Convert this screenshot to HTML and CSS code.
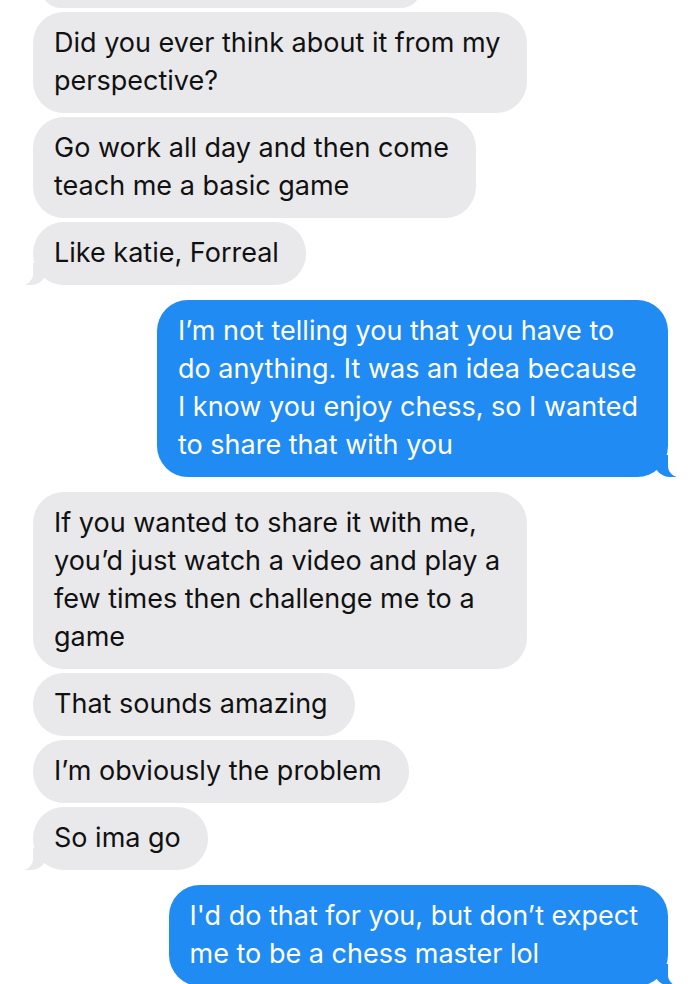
FILE: index.html
```html
<!DOCTYPE html>
<html lang="en">
<head>
    <meta charset="UTF-8">
    <meta name="viewport" content="width=device-width, initial-scale=1.0">
    <title>Messages</title>
    <link rel="stylesheet" href="styles.css">
</head>
<body>
    <div class="thread">
        <div class="group">
            <div class="bubble them cut"></div>
            <div class="bubble them">Did you ever think about it from my<br>perspective?</div>
            <div class="bubble them">Go work all day and then come<br>teach me a basic game</div>
            <div class="bubble them tail">Like katie, Forreal</div>
        </div>

        <div class="group">
            <div class="bubble me tail">I’m not telling you that you have to<br>do anything. It was an idea because<br>I know you enjoy chess, so I wanted<br>to share that with you</div>
        </div>

        <div class="group">
            <div class="bubble them">If you wanted to share it with me,<br>you’d just watch a video and play a<br>few times then challenge me to a<br>game</div>
            <div class="bubble them">That sounds amazing</div>
            <div class="bubble them">I’m obviously the problem</div>
            <div class="bubble them tail">So ima go</div>
        </div>

        <div class="group">
            <div class="bubble me tail">I'd do that for you, but don’t expect<br>me to be a chess master lol</div>
        </div>
    </div>
</body>
</html>
```

FILE: styles.css
```css
body {
    margin: 0;
    background-color: #fff;
    font-family: Inter, "Noto Sans", sans-serif;
    overflow: hidden;
}

.thread {
    padding: 0 32px 0 33px;
}

.group {
    display: flex;
    flex-direction: column;
    gap: 4px;
    margin-bottom: 15px;
}

.bubble {
    position: relative;
    width: fit-content;
    border-radius: 31px;
    font-size: 27px;
    line-height: 38px;
}

.them {
    align-self: flex-start;
    padding: 12px 27px 13px 21px;
    background-color: #e9e9eb;
    color: #111;
}

.me {
    align-self: flex-end;
    padding: 12px 30px 13px 21px;
    background-color: #1f8bf3;
    color: #fff;
}

.cut {
    width: 380px;
    height: 40px;
    margin-top: -32px;
    margin-left: 8px;
    padding: 0;
}

/* little tails at the bottom corner */
.them.tail::before,
.me.tail::before {
    content: "";
    position: absolute;
    bottom: 0;
    height: 22px;
    width: 22px;
}

.them.tail::after,
.me.tail::after {
    content: "";
    position: absolute;
    bottom: 0;
    height: 22px;
    width: 12px;
    background-color: #fff;
}

.them.tail::before {
    left: -8px;
    background-color: #e9e9eb;
    border-bottom-right-radius: 16px;
}

.them.tail::after {
    left: -12px;
    border-bottom-right-radius: 11px;
}

.me.tail::before {
    right: -8px;
    background-color: #1f8bf3;
    border-bottom-left-radius: 16px;
}

.me.tail::after {
    right: -12px;
    border-bottom-left-radius: 11px;
}
```
